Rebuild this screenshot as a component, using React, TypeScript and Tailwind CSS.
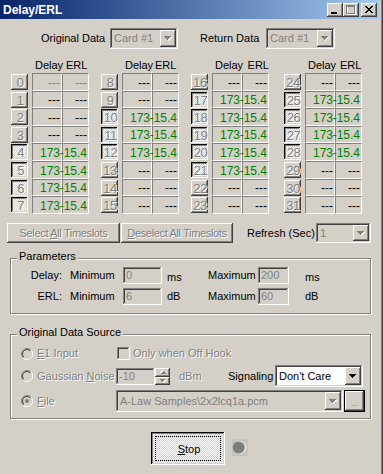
import type { ReactNode } from 'react';

// classic 3d edges
const raised =
  'shadow-[inset_-1px_-1px_#404040,inset_1px_1px_#fff,inset_-2px_-2px_#808080,inset_2px_2px_#d4d0c8]';
const pressed =
  'shadow-[inset_-1px_-1px_#fff,inset_1px_1px_#000,inset_-2px_-2px_#d4d0c8,inset_2px_2px_#808080]';
const sunken =
  'shadow-[inset_-1px_-1px_#fff,inset_1px_1px_#808080,inset_-2px_-2px_#d4d0c8,inset_2px_2px_#404040]';
const dither = '[background:repeating-conic-gradient(#fff_0%_25%,#d4d0c8_0%_50%)_0_0/2px_2px]';
const etched = 'text-[#808080] [text-shadow:1px_1px_0_#fff]';

const active = new Set([4, 5, 6, 7, 10, 11, 12, 17, 18, 19, 20, 21, 25, 26, 27, 28]);
const rowH = ['h-[18px]', 'h-[17px]', 'h-[18px]', 'h-[17px]', 'h-[18px]', 'h-[18px]', 'h-[17px]', 'h-[18px]'];
const colMl = ['ml-[11px]', 'ml-[12px]', 'ml-[12px]', 'ml-[15px]'];
const erlW = ['w-[31px]', 'w-[30px]', 'w-[35px]', 'w-[32px]'];

const Arrow = ({ disabled, small }: { disabled?: boolean; small?: boolean }) => {
  const rows = small ? [5, 3, 1] : [7, 5, 3, 1];
  const w = rows[0] + 1;
  const draw = (dx: number, fill: string) =>
    rows.map((n, i) => <rect key={`${fill}${i}`} x={i + dx} y={i + dx} width={n} height={1} fill={fill} />);
  return (
    <svg width={w} height={rows.length + 1} shapeRendering="crispEdges">
      {disabled && draw(1, '#fff')}
      {draw(0, disabled ? '#808080' : '#000')}
    </svg>
  );
};

const DropButton = ({ disabled }: { disabled?: boolean }) => (
  <div className={`flex h-full w-[16px] items-center justify-center bg-[#d4d0c8] ${raised}`}>
    <Arrow disabled={disabled} />
  </div>
);

const Combo = ({ text, className, disabled }: { text: string; className: string; disabled?: boolean }) => (
  <div
    className={`flex p-[2px] ${sunken} ${disabled ? 'bg-[#d4d0c8] text-[#808080]' : 'bg-white text-black'} ${className}`}
  >
    <span className="flex flex-1 items-center overflow-hidden pl-[2px] whitespace-nowrap">{text}</span>
    <DropButton disabled={disabled} />
  </div>
);

const Edit = ({ children, className }: { children: ReactNode; className: string }) => (
  <div className={`flex h-[17px] items-center bg-[#d4d0c8] pl-[3px] text-[#808080] ${sunken} ${className}`}>
    {children}
  </div>
);

const Radio = ({ checked, className }: { checked?: boolean; className?: string }) => (
  <svg width="12" height="12" viewBox="0 0 12 12" className={className}>
    <defs>
      <linearGradient id="rOut" x1="0" y1="0" x2="1" y2="1">
        <stop offset="0.5" stopColor="#808080" />
        <stop offset="0.5" stopColor="#fff" />
      </linearGradient>
      <linearGradient id="rIn" x1="0" y1="0" x2="1" y2="1">
        <stop offset="0.5" stopColor="#404040" />
        <stop offset="0.5" stopColor="#d4d0c8" />
      </linearGradient>
    </defs>
    <circle cx="6" cy="6" r="5.5" fill="none" stroke="url(#rOut)" />
    <circle cx="6" cy="6" r="4.5" fill="#d4d0c8" stroke="url(#rIn)" />
    {checked && <circle cx="6" cy="6" r="2" fill="#808080" />}
  </svg>
);

const Group = ({ label, className, children }: { label: string; className: string; children: ReactNode }) => (
  <div
    className={`relative ml-[10px] w-[361px] border border-[#808080] shadow-[inset_1px_1px_#fff,1px_1px_#fff] ${className}`}
  >
    <span className="absolute left-[6px] top-[-9px] bg-[#d4d0c8] px-[2px] leading-[13px]">{label}</span>
    {children}
  </div>
);

const SlotButton = ({ n, on }: { n: number; on: boolean }) => (
  <div
    className={`mt-[1px] flex h-[16px] w-[17px] shrink-0 items-center justify-center overflow-hidden text-[13px] leading-none tracking-[-0.6px] ${etched} ${
      on ? `${pressed} ${dither} pl-[2px] pt-[1px]` : `bg-[#d4d0c8] ${raised} pl-[1px]`
    }`}
  >
    {n}
  </div>
);

const cell =
  'flex items-center justify-end pr-[1px] pt-[1px] border border-t-[#808080] border-l-[#808080] border-r-white border-b-white text-[12px] leading-none';

const SlotColumn = ({ c }: { c: number }) => (
  <div className={`flex w-[78px] flex-col ${colMl[c]}`}>
    <div className="flex h-[13px] pl-[24px] leading-[13px] whitespace-nowrap">
      <span className={erlW[c]}>Delay</span>
      <span>ERL</span>
    </div>
    <div className="mt-[1px] flex flex-col">
      {rowH.map((h, r) => {
        const n = c * 8 + r;
        const on = active.has(n);
        const tone = on ? 'text-[#008000]' : n === 0 ? 'text-[#808080]' : 'text-black';
        return (
          <div key={n} className={`flex ${h}`}>
            <SlotButton n={n} on={on} />
            <div className={`ml-[4px] w-[30px] ${cell} ${tone}`}>{on ? '173' : '---'}</div>
            <div className={`w-[27px] ${cell} ${tone}`}>{on ? '-15.4' : '---'}</div>
          </div>
        );
      })}
    </div>
  </div>
);

const CaptionButton = ({ children, className = '' }: { children: ReactNode; className?: string }) => (
  <div className={`flex h-[14px] w-[16px] bg-[#d4d0c8] ${raised} ${className}`}>{children}</div>
);

const closeRows = [0, 1, 2, 3, 4, 5, 6];

const TitleBar = () => (
  <div className="flex h-[19px] w-[380px] bg-linear-to-r from-[#0a246a] to-[#a6caf0]">
    <span className="flex-1 pl-[3px] pt-[2px] text-[12px] leading-[17px] font-bold text-white">Delay/ERL</span>
    <div className="mt-[3px] flex">
      <CaptionButton>
        <svg width="16" height="14" shapeRendering="crispEdges">
          <rect x="4" y="9" width="6" height="2" fill="#000" />
        </svg>
      </CaptionButton>
      <CaptionButton>
        <svg width="16" height="14" shapeRendering="crispEdges">
          <g fill="none" stroke="#fff">
            <rect x="4.5" y="3.5" width="8" height="8" />
          </g>
          <rect x="3" y="2" width="9" height="2" fill="#808080" />
          <g fill="none" stroke="#808080">
            <rect x="3.5" y="2.5" width="8" height="8" />
          </g>
        </svg>
      </CaptionButton>
      <CaptionButton className="ml-[2px] mr-[3px]">
        <svg width="16" height="14" shapeRendering="crispEdges">
          {closeRows.map((i) => (
            <g key={i} fill="#000">
              <rect x={4 + i} y={3 + i} width={2} height={1} />
              <rect x={10 - i} y={3 + i} width={2} height={1} />
            </g>
          ))}
        </svg>
      </CaptionButton>
    </div>
  </div>
);

const Spin = () => (
  <div className="flex h-[17px] w-[15px] flex-col">
    <div className={`flex h-[9px] items-center justify-center bg-[#d4d0c8] ${raised}`}>
      <div className="rotate-180">
        <Arrow small disabled />
      </div>
    </div>
    <div className={`flex h-[8px] items-center justify-center bg-[#d4d0c8] ${raised}`}>
      <Arrow small disabled />
    </div>
  </div>
);

const Led = () => (
  <svg width="16" height="17" viewBox="0 0 16 17" className="ml-[7px] mb-[2px]">
    <rect x="0" y="0" width="16" height="17" fill="#c6c3bd" />
    <circle cx="8" cy="8.5" r="6.5" fill="#ecebe8" />
    <circle cx="6.8" cy="8.5" r="6" fill="#7d7d7d" />
  </svg>
);

export default function App() {
  return (
    <div className="flex h-[474px] w-[383px] font-['Liberation_Sans',Arial,sans-serif] text-[11px] leading-[13px] text-black">
      <div className="flex w-[380px] flex-col">
        <TitleBar />
        <div className="flex flex-1 flex-col bg-[#d4d0c8]">
          {/* card selectors */}
          <div className="mt-[9px] flex h-[21px] items-center">
            <span className="ml-[41px] w-[69px] whitespace-nowrap">Original Data</span>
            <Combo text="Card #1" disabled className="h-[21px] w-[68px]" />
            <span className="ml-[22px] w-[66px] whitespace-nowrap">Return Data</span>
            <Combo text="Card #1" disabled className="h-[21px] w-[69px]" />
          </div>

          {/* timeslots */}
          <div className="mt-[10px] flex">
            {[0, 1, 2, 3].map((c) => (
              <SlotColumn key={c} c={c} />
            ))}
          </div>

          <div className="mt-[9px] flex h-[20px] items-center">
            <div
              className={`ml-[7px] flex h-full w-[113px] items-center justify-center tracking-[-0.35px] bg-[#d4d0c8] ${raised} ${etched}`}
            >
              <span>
                Select <u>A</u>ll Timeslots
              </span>
            </div>
            <div
              className={`ml-[1px] flex h-full w-[112px] items-center justify-center tracking-[-0.35px] bg-[#d4d0c8] ${raised} ${etched}`}
            >
              <span>
                <u>D</u>eselect All Timeslots
              </span>
            </div>
            <span className="ml-[14px] w-[69px] whitespace-nowrap">Refresh (Sec)</span>
            <Combo text="1" disabled className="h-[20px] w-[55px]" />
          </div>

          {/* parameters */}
          <Group label="Parameters" className="mt-[15px] h-[56px] pt-[8px]">
            <div className="flex h-[17px] items-center">
              <span className="w-[51px] text-right">Delay:</span>
              <span className="ml-[8px] w-[53px]">Minimum</span>
              <Edit className="w-[39px]">0</Edit>
              <span className="ml-[5px] mt-[3px] w-[41px]">ms</span>
              <span className="w-[50px]">Maximum</span>
              <Edit className="w-[31px]">200</Edit>
              <span className="ml-[16px] mt-[3px]">ms</span>
            </div>
            <div className="mt-[4px] flex h-[17px] items-center">
              <span className="w-[51px] text-right">ERL:</span>
              <span className="ml-[8px] w-[53px]">Minimum</span>
              <Edit className="w-[39px]">6</Edit>
              <span className="ml-[5px] w-[41px]">dB</span>
              <span className="w-[50px]">Maximum</span>
              <Edit className="w-[31px]">60</Edit>
              <span className="ml-[16px]">dB</span>
            </div>
          </Group>

          {/* data source */}
          <Group label="Original Data Source" className="mt-[20px] h-[85px] pt-[10px]">
            <div className="flex h-[17px] items-center">
              <Radio className="ml-[10px]" />
              <span className={`ml-[4px] w-[80px] ${etched}`}>
                <u>E</u>1 Input
              </span>
              <div className={`h-[13px] w-[13px] bg-[#d4d0c8] ${sunken}`} />
              <span className={`ml-[3px] ${etched}`}>Only when Off Hook</span>
            </div>
            <div className="mt-[3px] flex h-[22px] items-center">
              <Radio className="ml-[10px]" />
              <span className={`ml-[4px] w-[79px] whitespace-nowrap ${etched}`}>
                Gaussian <u>N</u>oise
              </span>
              <Edit className="w-[39px]">-10</Edit>
              <Spin />
              <span className={`ml-[9px] w-[49px] ${etched}`}>dBm</span>
              <span className="w-[47px]">Signaling</span>
              <Combo text="Don't Care" className="h-[22px] w-[88px]" />
            </div>
            <div className="mt-[3px] flex h-[22px] items-center">
              <Radio checked className="ml-[10px]" />
              <span className={`ml-[4px] w-[79px] ${etched}`}>
                <u>F</u>ile
              </span>
              <Combo text="A-Law Samples\2x2lcq1a.pcm" disabled className="h-[22px] w-[227px]" />
              <div
                className={`ml-[1px] flex h-[22px] w-[21px] items-end justify-center border border-black bg-[#d4d0c8] pb-[3px] text-[9px] leading-none text-[#808080] ${raised}`}
              >
                ...
              </div>
            </div>
          </Group>

          {/* start / stop */}
          <div className="mt-[13px] flex items-center">
            <div className={`ml-[151px] flex h-[33px] w-[74px] p-[4px] ${pressed} ${dither}`}>
              <div className="flex flex-1 items-center justify-center border border-dotted border-black pl-[2px] pt-[1px]">
                <span>
                  <u>S</u>top
                </span>
              </div>
            </div>
            <Led />
          </div>
        </div>
      </div>
      <div className="w-[1px] bg-[#d4d0c8]" />
      <div className="w-[1px] bg-[#808080]" />
      <div className="w-[1px] bg-[#404040]" />
    </div>
  );
}
